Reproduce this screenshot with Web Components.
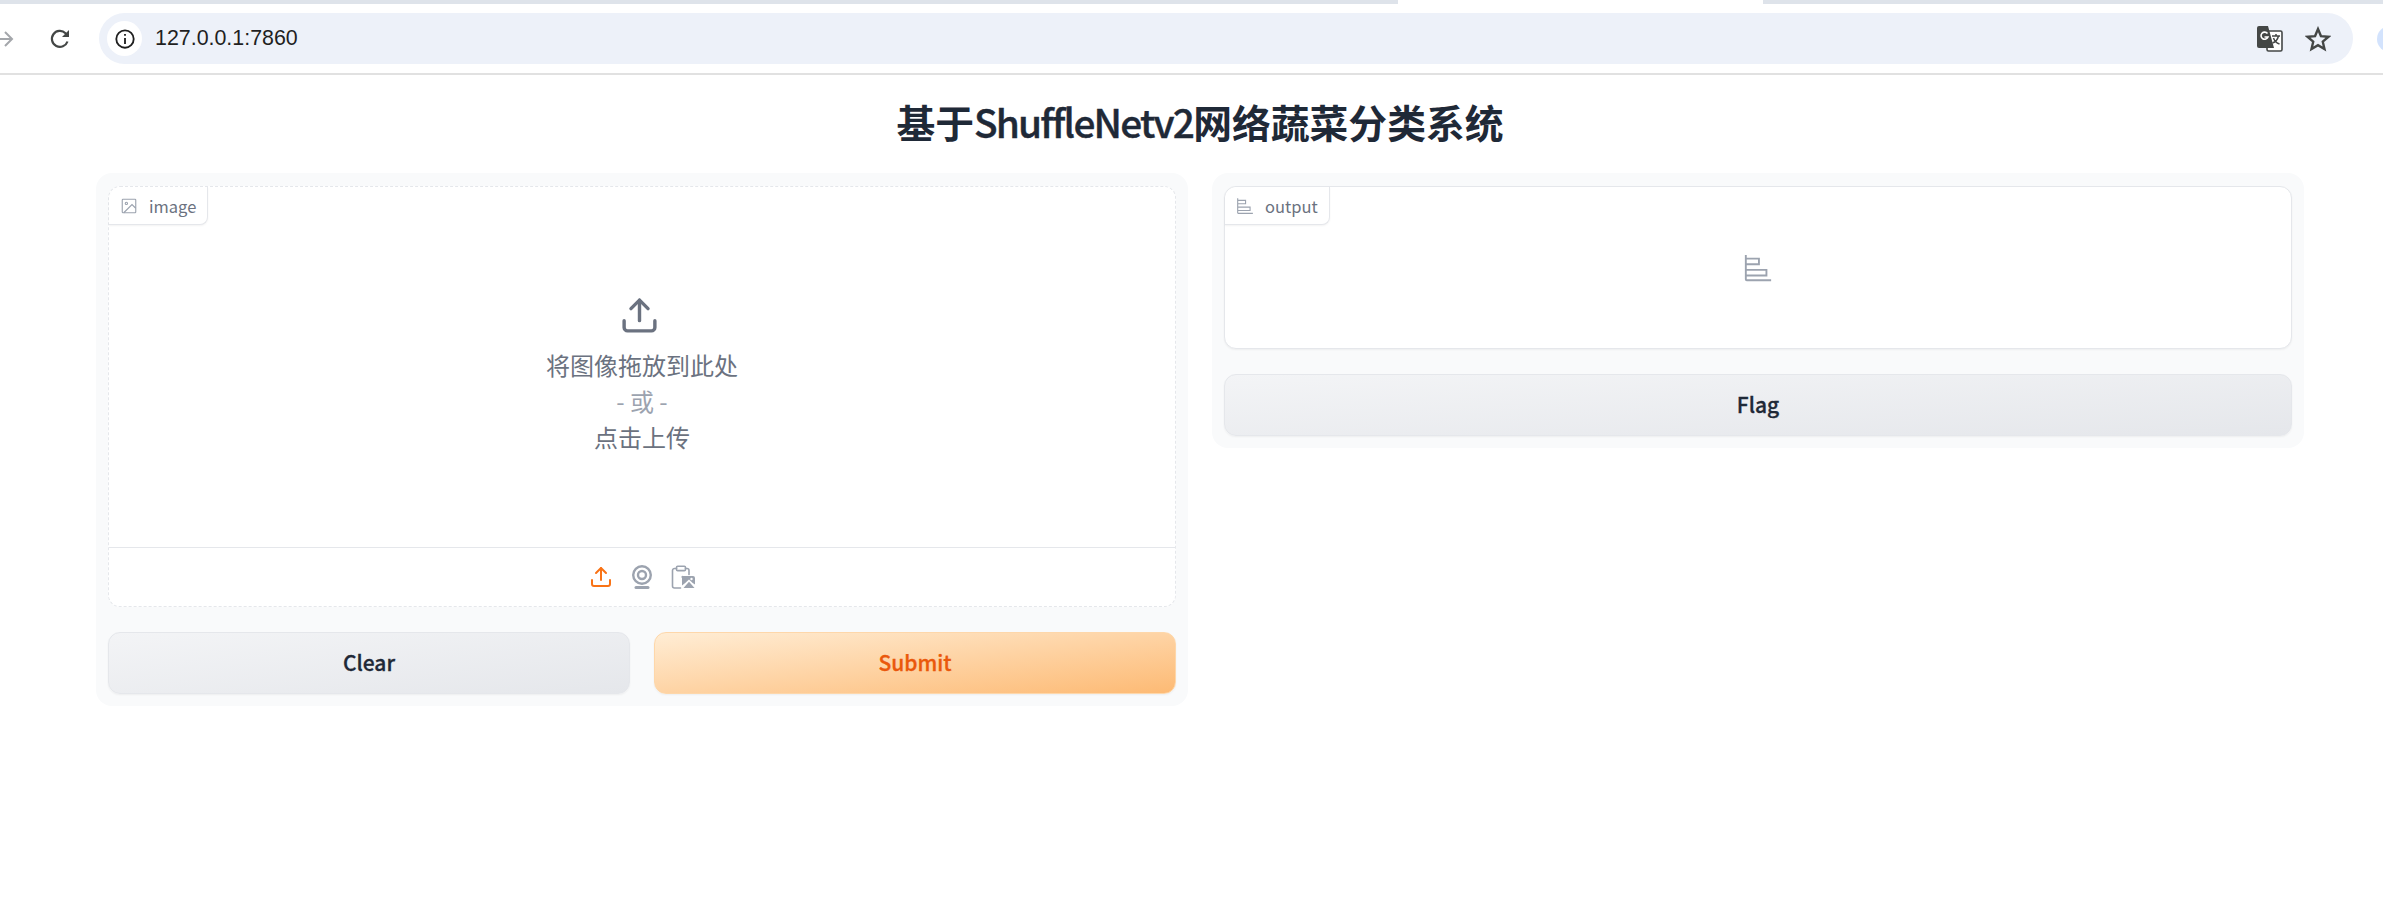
<!DOCTYPE html>
<html lang="zh">
<head>
<meta charset="utf-8">
<title>ShuffleNetv2</title>
<style>
  html, body { margin: 0; background: #fff; height: 100%; overflow: hidden; }
  body { font-family: "Noto Sans CJK SC", "Noto Sans", sans-serif; }
</style>
</head>
<body>
<browser-bar url="127.0.0.1:7860"></browser-bar>
<app-page>
  <app-title>基于<span>ShuffleNetv2</span>网络蔬菜分类系统</app-title>
  <app-row>
    <app-panel>
      <image-input label="image"></image-input>
      <button-row>
        <app-button>Clear</app-button>
        <app-button primary>Submit</app-button>
      </button-row>
    </app-panel>
    <app-panel>
      <label-output label="output"></label-output>
      <app-button>Flag</app-button>
    </app-panel>
  </app-row>
</app-page>

<script>
const ICONS = {
  image: `<svg viewBox="0 0 24 24" fill="none" stroke="currentColor" stroke-width="1.5"><rect x="3" y="3" width="18" height="18" rx="1"/><circle cx="8.5" cy="8.5" r="1.5"/><polyline points="21 15 16 10 5 21"/></svg>`,
  chart: `<svg viewBox="0 0 32 32"><path fill="currentColor" d="M4 2H2v26a2 2 0 0 0 2 2h26v-2H4v-3h22v-8H4v-4h14V5H4Zm20 17v4H4v-4ZM16 7v4H4V7Z"/></svg>`,
  upload: `<svg viewBox="0 0 24 24" fill="none" stroke="currentColor" stroke-width="2" stroke-linecap="round" stroke-linejoin="round"><path d="M21 15v4a2 2 0 0 1-2 2H5a2 2 0 0 1-2-2v-4"/><polyline points="17 8 12 3 7 8"/><line x1="12" y1="3" x2="12" y2="15"/></svg>`,
  webcam: `<svg viewBox="0 0 24 24" fill="none" stroke="currentColor" stroke-width="2.4"><circle cx="12" cy="10" r="8.800"/><circle cx="12" cy="10" r="4"/><path d="M6 22.500h12" stroke-width="3" stroke-linecap="round"/></svg>`,
  clipboard: `<svg viewBox="0 0 24 24" fill="none" stroke="currentColor" stroke-width="1.6" stroke-linecap="round" stroke-linejoin="round"><path d="M5.500 3.500H3.500a2 2 0 0 0-2 2V21a2 2 0 0 0 2 2h6"/><path d="M14.500 3.500h1.500a2 2 0 0 1 2 2v4"/><rect x="5.500" y="1.200" width="9" height="4.400" rx="1.200"/><path fill="currentColor" stroke="none" d="M12 11h10a2 2 0 0 1 2 2v6.500l-2.300-1.500-3.700-3.500-3.800 3.500-3.200 2.500V13a1 1 0 0 1 1-2Z"/><path fill="currentColor" stroke="none" d="M18 16.800l5.500 6.200h-11Z"/><circle cx="20.500" cy="14" r="1.200" fill="#fff" stroke="none"/></svg>`
};

class BrowserBar extends HTMLElement {
  constructor() {
    super();
    this.attachShadow({mode: "open"});
    this.shadowRoot.innerHTML = `
    <style>
      :host { display: block; }
      .tabs { display: flex; height: 4px; background: #dee3ea; }
      .tabs .active { width: 365px; margin-left: 1398px; background: #fff; }
      .bar {
        display: flex;
        align-items: center;
        height: 69px;
        border-bottom: 2px solid #e1e1e1;
        box-sizing: content-box;
        overflow: hidden;
      }
      .forward { width: 16px; height: 24px; margin-left: -2px; color: #a4a7ab; flex: none; }
      .reload { width: 24px; height: 24px; margin-left: 34px; color: #444746; flex: none; }
      .omni {
        flex: none;
        display: flex;
        align-items: center;
        width: 2254px;
        height: 51px;
        margin-left: 27px;
        box-sizing: border-box;
        padding: 0 22px 0 8px;
        background: #edf1f9;
        border-radius: 26px;
      }
      .info {
        width: 35px; height: 35px; border-radius: 50%;
        background: #fff; color: #1f1f1f;
        display: flex; align-items: center; justify-content: center; flex: none;
      }
      .info svg { width: 22px; height: 22px; }
      .url {
        margin-left: 13px; flex: 1;
        font: 21.4px "Liberation Sans", Arial, sans-serif; color: #1f1f1f;
      }
      .translate { width: 26px; height: 26px; color: #444746; flex: none; }
      .star { width: 26px; height: 26px; margin-left: 22px; color: #444746; flex: none; }
      .avatar { width: 26px; height: 26px; margin-left: 24px; border-radius: 50%; background: #d3e3fd; flex: none; }
    </style>
    <div class="tabs"><div class="active"></div></div>
    <div class="bar">
      <svg class="forward" viewBox="0 0 16 24" fill="none" stroke="currentColor" stroke-width="2"><path d="M0 12h14M7 5l7 7-7 7"/></svg>
      <svg class="reload" viewBox="0 0 24 24" fill="none" stroke="currentColor" stroke-width="2.2"><path d="M19.500 14.500A8 8 0 1 1 17.500 6.200L20 8.500"/><path fill="currentColor" stroke="none" d="M21 3v7h-7z"/></svg>
      <div class="omni">
        <span class="info">
          <svg viewBox="0 0 24 24" fill="none" stroke="currentColor" stroke-width="2"><circle cx="12" cy="12" r="9.500"/><path d="M12 11v6.500M12 6.500v2"/></svg>
        </span>
        <span class="url">${this.getAttribute("url")}</span>
        <svg class="translate" viewBox="0 0 26 26">
          <rect x="10" y="5" width="15" height="20" rx="1.500" fill="#fff" stroke="currentColor" stroke-width="1.600"/>
          <path fill="currentColor" d="M2 0h9l6 22H2a2 2 0 0 1-2-2V2a2 2 0 0 1 2-2Z"/>
          <path fill="none" stroke="#fff" stroke-width="1.600" d="M10.500 7.500A3.600 3.600 0 1 0 11 11H7.500"/>
          <path fill="none" stroke="currentColor" stroke-width="1.500" d="M15 10h8M19 8v2M21.500 10c-1 4-3 6-6 7M16.500 12c1 3 3 5 6 6"/>
        </svg>
        <svg class="star" viewBox="0 0 24 24" fill="none" stroke="currentColor" stroke-width="2.200"><path d="M12 2.800l2.700 6.500 7 .6-5.300 4.600 1.600 6.800-6-3.600-6 3.600 1.600-6.800L2.300 9.900l7-.6Z"/></svg>
      </div>
      <span class="avatar"></span>
    </div>`;
  }
}
customElements.define("browser-bar", BrowserBar);

class AppPage extends HTMLElement {
  constructor() {
    super();
    this.attachShadow({mode: "open"});
    this.shadowRoot.innerHTML = `
    <style>
      /* the reference scrolls a little off centre: everything sits on x = 1200 */
      :host { display: block; padding-left: 17px; }
    </style>
    <slot></slot>`;
  }
}
customElements.define("app-page", AppPage);

class AppTitle extends HTMLElement {
  constructor() {
    super();
    this.attachShadow({mode: "open"});
    this.shadowRoot.innerHTML = `
    <style>
      :host {
        display: block;
        text-align: center;
        font-size: 38.8px;
        font-weight: 700;
        line-height: 44px;
        color: #1f2937;
        padding-top: 24px;
        height: 74px;
        white-space: nowrap;
      }
      ::slotted(span) {
        font-weight: 500;
        letter-spacing: -1.8px;
        -webkit-text-stroke: 0.4px currentColor;
      }
    </style>
    <slot></slot>`;
  }
}
customElements.define("app-title", AppTitle);

class AppRow extends HTMLElement {
  constructor() {
    super();
    this.attachShadow({mode: "open"});
    this.shadowRoot.innerHTML = `
    <style>
      :host {
        display: grid;
        grid-template-columns: 1fr 1fr;
        gap: 24px;
        align-items: start;
        width: 2208px;
        margin: 0 auto;
      }
    </style>
    <slot></slot>`;
  }
}
customElements.define("app-row", AppRow);

class AppPanel extends HTMLElement {
  constructor() {
    super();
    this.attachShadow({mode: "open"});
    this.shadowRoot.innerHTML = `
    <style>
      :host {
        display: flex;
        flex-direction: column;
        gap: 25px;
        padding: 13px 12px 12px;
        background: #f9fafb;
        border-radius: 16px;
        min-width: 0;
      }
    </style>
    <slot></slot>`;
  }
}
customElements.define("app-panel", AppPanel);

class ButtonRow extends HTMLElement {
  constructor() {
    super();
    this.attachShadow({mode: "open"});
    this.shadowRoot.innerHTML = `
    <style>
      :host { display: grid; grid-template-columns: 1fr 1fr; gap: 24px; }
    </style>
    <slot></slot>`;
  }
}
customElements.define("button-row", ButtonRow);

class AppButton extends HTMLElement {
  constructor() {
    super();
    this.attachShadow({mode: "open"});
    this.shadowRoot.innerHTML = `
    <style>
      :host {
        display: flex;
        align-items: center;
        justify-content: center;
        box-sizing: border-box;
        height: 62px;
        border-radius: 12px;
        border: 1px solid #e5e7eb;
        background: linear-gradient(to bottom right, #f3f4f6, #e5e7eb);
        color: #1f2937;
        font-size: 21px;
        font-weight: 500;
        -webkit-text-stroke: 0.3px currentColor;
        padding-bottom: 2px;
        box-shadow: 0 1px 2px rgba(0,0,0,0.05);
      }
      :host([primary]) {
        border-color: #fed7aa;
        background: linear-gradient(to bottom right, #ffedd5, #fdba74);
        color: #ea580c;
      }
    </style>
    <slot></slot>`;
  }
}
customElements.define("app-button", AppButton);

class BlockLabel extends HTMLElement {
  constructor() {
    super();
    this.attachShadow({mode: "open"});
    this.shadowRoot.innerHTML = `
    <style>
      :host {
        position: absolute;
        top: 0;
        left: 0;
        display: flex;
        align-items: center;
        box-sizing: border-box;
        height: 38px;
        padding: 0 11px;
        gap: 11px;
        background: #fff;
        color: #6b7280;
        font-size: 16.5px;
        border-right: 1px solid #e5e7eb;
        border-bottom: 1px solid #e5e7eb;
        border-radius: 12px 0 8px 0;
        box-shadow: 0 1px 2px rgba(0,0,0,0.05);
      }
      span { display: flex; width: 18px; height: 18px; color: #9ca3af; }
      svg { width: 100%; height: 100%; }
    </style>
    <span>${ICONS[this.getAttribute("icon")]}</span>
    <slot></slot>`;
  }
}
customElements.define("block-label", BlockLabel);

class ImageInput extends HTMLElement {
  constructor() {
    super();
    this.attachShadow({mode: "open"});
    this.shadowRoot.innerHTML = `
    <style>
      :host {
        display: flex;
        flex-direction: column;
        position: relative;
        height: 421px;
        box-sizing: border-box;
        background: #fff;
        border: 1px dashed #e5e7eb;
        border-radius: 12px;
      }
      .drop {
        flex: 1;
        display: flex;
        flex-direction: column;
        align-items: center;
        justify-content: center;
        padding-top: 16px;
        font-size: 24px;
        line-height: 36px;
        color: #6b7280;
      }
      .drop svg { width: 41px; height: 41px; margin: 0 5px 11px 0; }
      .or { color: #9ca3af; }
      .sources {
        display: flex;
        align-items: center;
        justify-content: center;
        gap: 17px;
        height: 58px;
        border-top: 1px solid #e5e7eb;
        color: #9ca3af;
      }
      .sources span { display: flex; width: 24px; height: 24px; }
      .sources .on { color: #f97316; }
      svg { display: block; width: 100%; height: 100%; }
    </style>
    <block-label icon="image">${this.getAttribute("label")}</block-label>
    <div class="drop">
      ${ICONS.upload}
      <div>将图像拖放到此处</div>
      <div class="or">- 或 -</div>
      <div>点击上传</div>
    </div>
    <div class="sources">
      <span class="on">${ICONS.upload}</span>
      <span>${ICONS.webcam}</span>
      <span>${ICONS.clipboard}</span>
    </div>`;
  }
}
customElements.define("image-input", ImageInput);

class LabelOutput extends HTMLElement {
  constructor() {
    super();
    this.attachShadow({mode: "open"});
    this.shadowRoot.innerHTML = `
    <style>
      :host {
        display: flex;
        align-items: center;
        justify-content: center;
        position: relative;
        height: 163px;
        box-sizing: border-box;
        background: #fff;
        border: 1px solid #e5e7eb;
        border-radius: 12px;
        box-shadow: 0 1px 2px rgba(0,0,0,0.05);
      }
      .empty { width: 30px; height: 30px; color: #9ca3af; }
      svg { display: block; width: 100%; height: 100%; }
    </style>
    <block-label icon="chart">${this.getAttribute("label")}</block-label>
    <div class="empty">${ICONS.chart}</div>`;
  }
}
customElements.define("label-output", LabelOutput);
</script>
</body>
</html>
